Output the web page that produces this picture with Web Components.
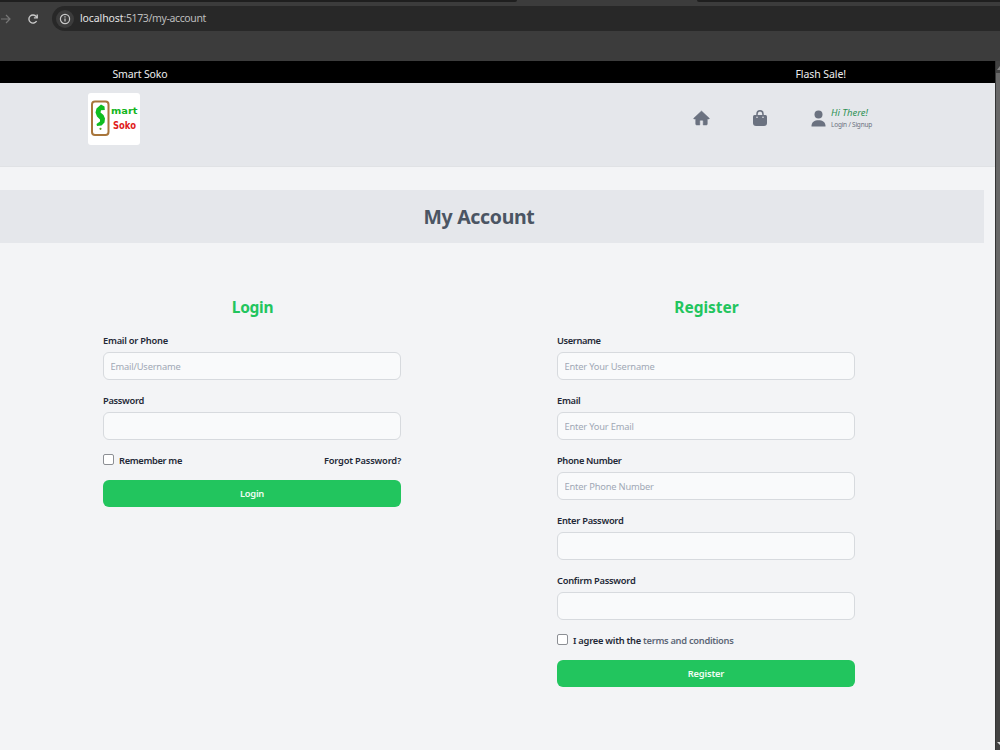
<!DOCTYPE html>
<html lang="en">
<head>
<meta charset="utf-8">
<title>Smart Soko</title>
<style>
    body {
        margin: 0;
        height: 750px;
        overflow: hidden;
        background: #3b3b3b;
        color: #1f2937;
        font-family: "Noto Sans", "Open Sans", sans-serif;
        font-size: 9.3px;
    }
</style>
</head>
<body>

<soko-window>
    <browser-bar slot="chrome" host="localhost" path=":5173/my-account"></browser-bar>

    <promo-bar>
        <fit-text width="55">Smart Soko</fit-text>
        <fit-text slot="end" width="50.5">Flash Sale!</fit-text>
    </promo-bar>
    <site-header></site-header>
    <page-title><fit-text width="111">My Account</fit-text></page-title>

    <account-forms>
        <account-card>
            <fit-text slot="heading" width="41.5">Login</fit-text>
            <form-field placeholder="Email/Username"><fit-text width="65">Email or Phone</fit-text></form-field>
            <form-field type="password"><fit-text width="41">Password</fit-text></form-field>
            <check-row>
                <fit-text width="63">Remember me</fit-text>
                <fit-text slot="end" width="77">Forgot Password?</fit-text>
            </check-row>
            <submit-button><fit-text width="24">Login</fit-text></submit-button>
        </account-card>

        <account-card>
            <fit-text slot="heading" width="64.5">Register</fit-text>
            <form-field placeholder="Enter Your Username"><fit-text width="43.5">Username</fit-text></form-field>
            <form-field placeholder="Enter Your Email"><fit-text width="23.5">Email</fit-text></form-field>
            <form-field placeholder="Enter Phone Number"><fit-text width="64.5">Phone Number</fit-text></form-field>
            <form-field type="password"><fit-text width="66.5">Enter Password</fit-text></form-field>
            <form-field type="password"><fit-text width="78.5">Confirm Password</fit-text></form-field>
            <check-row>
                <fit-text width="68">I agree with the</fit-text>
                <fit-text width="90.5" style="color: #5d6776; margin-left: 2px">terms and conditions</fit-text>
            </check-row>
            <submit-button><fit-text width="36.5">Register</fit-text></submit-button>
        </account-card>
    </account-forms>
</soko-window>

<script>
// Attach an open shadow root filled from a template
function define(name, html, setup) {
    const template = document.createElement('template');
    template.innerHTML = html;

    customElements.define(name, class extends HTMLElement {
        constructor() {
            super();
            this.attachShadow({ mode: 'open' });
            this.shadowRoot.appendChild(template.content.cloneNode(true));
        }

        connectedCallback() {
            if (setup) setup(this, this.shadowRoot);
        }
    });
}


// ╔══════════════════════════════════════════════════════════╗
// ║                      WINDOW + CHROME                     ║
// ╚══════════════════════════════════════════════════════════╝
define('soko-window', /* html */`
    <style>
        :host { display: flex; flex-direction: column; height: 750px; }
        #view { display: flex; flex: 1; min-height: 0; }
        #page { flex: 1; background: #f3f4f6; overflow: hidden; }
        #scroll {
            display: flex;
            flex-direction: column;
            box-sizing: border-box;
            width: 5px;
            border-left: 1px solid #343434;
            background: #424242;
            overflow: hidden;
        }
        #thumb { height: 457px; background: #686868; }
        #scroll svg { display: block; flex: none; width: 4px; }
        #down { margin-top: auto; }
    </style>
    <slot name="chrome"></slot>
    <div id="view">
        <div id="page"><slot></slot></div>
        <div id="scroll">
            <svg height="12" viewBox="0 0 4 12"><path d="M1 9 4 5V9Z" fill="#858585"/></svg>
            <div id="thumb"></div>
            <svg id="down" height="9" viewBox="0 0 4 9"><path d="M1 1H4V4Z" fill="#ddd"/></svg>
        </div>
    </div>
`);

define('browser-bar', /* html */`
    <style>
        :host { display: flex; flex-direction: column; height: 61px; background: #3c3c3c; color: #c9c9c9; }
        #tabs { display: flex; justify-content: space-between; height: 2px; }
        #tabs i { height: 2px; background: #1f1f1f; }
        #tabs i:first-child { width: 517px; border-bottom-right-radius: 2px; }
        #tabs i:last-child { width: 303px; border-bottom-left-radius: 2px; }
        #row { display: flex; align-items: center; height: 25px; padding-top: 4px; }
        svg { display: block; flex: none; fill: none; stroke: currentColor; }
        #next { color: #777; }
        #reload { margin-left: 16px; }
        #url {
            display: flex;
            align-items: center;
            flex: 1;
            height: 25px;
            margin-left: 13px;
            border-radius: 13px 0 0 13px;
            background: #282828;
            font-size: 10.5px;
        }
        #info {
            display: flex;
            align-items: center;
            justify-content: center;
            width: 18px;
            height: 18px;
            margin: 0 6px 0 4px;
            border-radius: 50%;
            background: #3c3c3c;
        }
        #host { color: #e3e3e3; padding-bottom: 1px; }
        #path { color: #bdbdbd; padding-bottom: 1px; }
    </style>
    <div id="tabs"><i></i><i></i></div>
    <div id="row">
        <svg id="next" width="11" height="12" viewBox="0 0 11 12" stroke-width="1.2"><path d="M1 6H10M6 2 10 6 6 10"/></svg>
        <svg id="reload" width="12" height="12" viewBox="0 0 12 12" stroke-width="1.4"><path d="M9.6 8A4.1 4.1 0 1 1 9.3 3.6L10 4.6"/><path d="M10.2 1.6V4.9H6.9"/></svg>
        <div id="url">
            <span id="info">
                <svg width="12" height="12" viewBox="0 0 12 12" stroke-width="1.2"><circle cx="6" cy="6" r="4.6"/><path d="M6 5.4V8.6M6 3.3V4.5"/></svg>
            </span>
            <fit-text id="host" width="43.5"></fit-text><fit-text id="path" width="82.5"></fit-text>
        </div>
    </div>
`, (el, root) => {
    root.querySelector('#host').textContent = el.getAttribute('host');
    root.querySelector('#path').textContent = el.getAttribute('path');
});


// ╔══════════════════════════════════════════════════════════╗
// ║                          HEADER                          ║
// ╚══════════════════════════════════════════════════════════╝
define('promo-bar', /* html */`
    <style>
        :host {
            display: flex;
            justify-content: space-between;
            align-items: center;
            box-sizing: border-box;
            height: 22px;
            padding: 3px 149px 0 112.5px;
            background: #000;
            color: #eee;
            font-size: 10.5px;
        }
    </style>
    <slot></slot>
    <slot name="end"></slot>
`);

define('site-header', /* html */`
    <style>
        :host {
            display: flex;
            justify-content: space-between;
            box-sizing: border-box;
            height: 84px;
            padding: 10px 122px 0 88px;
            background: #e5e7eb;
            border-bottom: 1px solid #e0e2e5;
            color: #6b7280;
        }
        svg { display: block; }
        nav { display: flex; align-items: center; height: 50px; }
        #home { margin-right: 42px; }
        #bag { margin-right: 43px; }
        #user { margin-right: 5px; }
        #who { display: flex; flex-direction: column; padding-right: 1px; }
        #hi { color: #2f9256; font-size: 9.5px; font-style: italic; line-height: 13px; }
        #links { font-size: 6.5px; line-height: 12px; }
    </style>
    <svg width="52" height="52" viewBox="0 0 52 52">
        <rect width="52" height="52" rx="3" fill="#fff"/>
        <rect x="4" y="8.500" width="16.500" height="33.500" rx="3" fill="#fff" stroke="#a8753b" stroke-width="2"/>
        <path d="M13 11.500 16.500 13.500 16.800 17 13 17.200 12.500 19.500 15.500 22 17 25.500 16.500 29.500 13.500 32.500 9 33 8.500 31 12 28.500 12 26.500 9 23.500 7.500 19.500 8.500 15.500 11 13.300Z" fill="#0fbd20"/>
        <circle cx="12.500" cy="35.800" r="1.100" fill="#5d9a25"/>
        <g font-family="DejaVu Sans, sans-serif" font-weight="bold">
            <text x="23" y="20.500" font-size="9.500" textLength="26.500" lengthAdjust="spacingAndGlyphs" fill="#12b521">mart</text>
            <text x="25" y="35.500" font-size="10" textLength="23" lengthAdjust="spacingAndGlyphs" fill="#e01b20">Soko</text>
        </g>
    </svg>
    <nav>
        <svg id="home" width="17" height="16" viewBox="0 0 17 16" fill="currentColor"><path d="M8.500 1 .7 8.200Q.5 9 1.300 9H2.700V14Q2.700 15 3.700 15H6.800V11Q6.800 10.200 7.600 10.200H9.400Q10.200 10.200 10.200 11V15H13.300Q14.300 15 14.300 14V9H15.700Q16.500 9 16.300 8.200Z" stroke="currentColor" stroke-width=".5" stroke-linejoin="round"/></svg>
        <svg id="bag" width="16" height="18" viewBox="0 0 16 18"><path d="M5 8V5A3 3.300 0 0 1 11 5V8" fill="none" stroke="currentColor" stroke-width="1.500"/><path d="M2.500 6H13.500Q15 6 15 7.500V13.800Q15 17 12 17H4Q1 17 1 13.800V7.500Q1 6 2.500 6Z" fill="currentColor"/><circle cx="5" cy="8.300" r=".8" fill="#e5e7eb"/><circle cx="11" cy="8.300" r=".8" fill="#e5e7eb"/></svg>
        <svg id="user" width="15" height="17" viewBox="0 0 15 17" fill="currentColor"><circle cx="7.500" cy="4.500" r="4"/><path d="M.5 16.500C.3 12 3.500 10.200 7.500 10.200S14.700 12 14.500 16.500Z"/></svg>
        <div id="who">
            <fit-text id="hi" width="37">Hi There!</fit-text>
            <fit-text id="links" width="41">Login / Signup</fit-text>
        </div>
    </nav>
`);


// ╔══════════════════════════════════════════════════════════╗
// ║                       PAGE CONTENT                       ║
// ╚══════════════════════════════════════════════════════════╝
define('page-title', /* html */`
    <style>
        :host {
            display: flex;
            align-items: center;
            justify-content: center;
            box-sizing: border-box;
            height: 53px;
            margin: 23px 11px 0 0;
            padding-right: 26px;
            background: #e5e7eb;
            color: #4b5563;
            font-size: 19.5px;
            font-weight: 700;
        }
    </style>
    <slot></slot>
`);

define('account-forms', /* html */`
    <style>
        :host { display: grid; grid-template-columns: 298px 298px; gap: 156px; padding: 52px 0 0 103px; }
    </style>
    <slot></slot>
`);

define('account-card', /* html */`
    <style>
        :host { display: flex; flex-direction: column; }
        h2 {
            display: flex;
            justify-content: center;
            height: 24px;
            margin: 0 0 14px;
            padding-left: 1px;
            color: #22c55e;
            font-size: 15.5px;
            font-weight: 700;
            line-height: 24px;
        }
    </style>
    <h2><slot name="heading"></slot></h2>
    <slot></slot>
`);

define('form-field', /* html */`
    <style>
        :host { display: flex; flex-direction: column; height: 60px; }
        label { height: 19px; font-weight: 600; line-height: 15px; }
        input {
            box-sizing: border-box;
            width: 100%;
            height: 28px;
            padding: 0 6.5px;
            border: 1px solid #d7dade;
            border-radius: 6px;
            outline: none;
            background: #f9fafb;
            font: inherit;
            letter-spacing: -.18px;
        }
        input::placeholder { color: #a0a8b5; opacity: 1; }
    </style>
    <label><slot></slot></label>
    <input>
`, (el, root) => {
    const input = root.querySelector('input');
    input.type = el.getAttribute('type') || 'text';
    input.placeholder = el.getAttribute('placeholder') || '';
});

define('check-row', /* html */`
    <style>
        :host { display: flex; align-items: center; height: 14px; margin-bottom: 13px; font-weight: 600; }
        input {
            appearance: none;
            box-sizing: border-box;
            width: 11px;
            height: 11px;
            margin: 0 5px 1px 0;
            border: 1px solid #8c8f94;
            border-radius: 2px;
            background: #fff;
        }
        #end { margin-left: auto; }
    </style>
    <input type="checkbox">
    <slot></slot>
    <span id="end"><slot name="end"></slot></span>
`);

define('submit-button', /* html */`
    <style>
        :host { display: flex; }
        button {
            flex: 1;
            display: flex;
            align-items: center;
            justify-content: center;
            height: 27px;
            padding: 0;
            border: 0;
            border-radius: 6px;
            background: #22c55e;
            color: #effcf3;
            font: inherit;
            font-weight: 600;
        }
    </style>
    <button><slot></slot></button>
`);


// ╔══════════════════════════════════════════════════════════╗
// ║              TEXT TRACKED TO A GIVEN WIDTH               ║
// ╚══════════════════════════════════════════════════════════╝
define('fit-text', /* html */`
    <style>
        :host { display: block; white-space: nowrap; }
        span { display: inline-block; }
    </style>
    <span><slot></slot></span>
`, (el, root) => {
    const span = root.querySelector('span');
    const extra = el.getAttribute('width') - span.getBoundingClientRect().width;
    if (el.textContent) span.style.letterSpacing = extra / el.textContent.length + 'px';
});
</script>
</body>
</html>
